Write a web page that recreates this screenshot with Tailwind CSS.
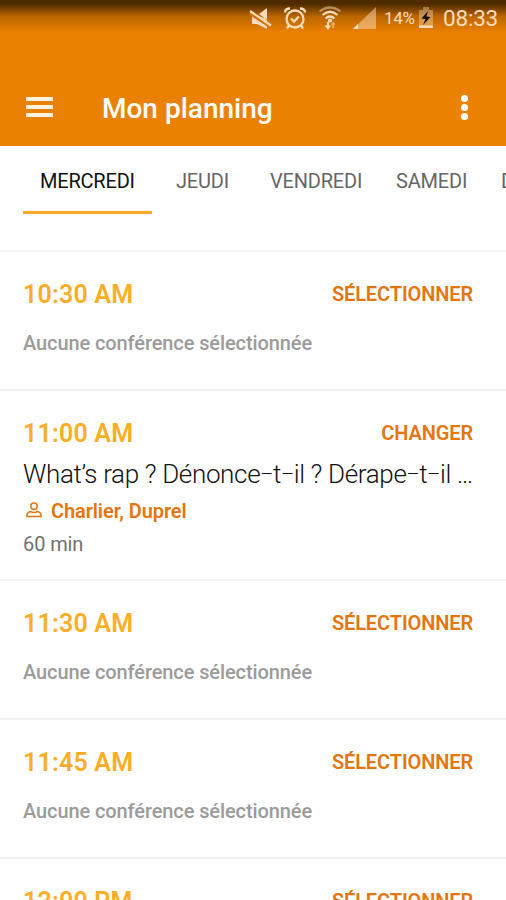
<!DOCTYPE html>
<html lang="fr">
<head>
<meta charset="utf-8">
<title>Mon planning</title>
<script src="https://cdn.jsdelivr.net/npm/@tailwindcss/browser@4"></script>
</head>
<body class="w-[506px] h-[900px] overflow-hidden bg-white font-[Roboto,sans-serif]">
<header class="h-[146px] bg-[#eb8100] text-white flex flex-col">
  <div class="h-[36px] shrink-0 flex items-center justify-end pr-[9px] bg-linear-to-b from-[#4d2a00] from-10% via-[#b96500] via-45% to-[#eb8100] to-90% text-[#fbdcba]">
    <svg class="w-[24px] h-[24px] mr-[10px]" viewBox="0 0 24 24" fill="currentColor"><path d="M3 8v10h5l10 5V13zM10 8l8-6v12z"/><path d="M1 7l22 14" stroke="#d07100" stroke-width="4"/><path d="M1 5l21 14.500" stroke="currentColor" stroke-width="2.200"/></svg>
    <svg class="w-[24px] h-[24px] mr-[11px]" viewBox="0 0 24 24" fill="none" stroke="currentColor" stroke-width="2.300"><circle cx="12" cy="13" r="8.500"/><path d="M8 12.500l3 3 5-5M2 6.500q0-4 5-4M22 6.500q0-4-5-4M6 19.500l-2 3M18 19.500l2 3"/></svg>
    <svg class="w-[24px] h-[26px] mr-[11px]" viewBox="0 0 24 26" fill="none" stroke="currentColor" stroke-width="2.200"><path d="M1.500 6.500Q12-1.500 22.500 6.500" opacity=".5"/><path d="M4.500 10Q12 3.500 19.500 10M7.500 13.500Q12 9.500 16.500 13.500"/><circle cx="12" cy="15.500" r="1" fill="currentColor"/><path d="M10 17v5"/><path d="M6.500 20.500h6.500l-3 4.500z" fill="currentColor" stroke="none"/><path d="M15 23v-4M13.500 20l1.500-2 1.500 2" opacity=".5"/></svg>
    <svg class="w-[23px] h-[24px] mr-[8px]" viewBox="0 0 23 24" fill="currentColor"><path d="M0 23L23 1v22z" opacity=".5"/><path d="M0 23l5-5v5z"/></svg>
    <span class="w-[31px] text-[17px] leading-[24px] tracking-[-0.3px] whitespace-nowrap mr-[4px]">14%</span>
    <svg class="w-[14px] h-[22px] mr-[10px]" viewBox="0 0 14 22"><path d="M4 0h6v3h4v18H0V3h4z" fill="currentColor" opacity=".4"/><path d="M0 18.500h14V21H0z" fill="currentColor"/><path d="M9 4L2.500 11.500l4 .5L4 18l7.500-8-4-.5z" fill="#160c00"/></svg>
    <span class="w-[54px] text-[22.500px] leading-[26px] tracking-[-0.2px] whitespace-nowrap">08:33</span>
  </div>
  <div class="h-[110px] flex items-center pl-[26px] pr-[38px] pt-[34px]">
    <div class="w-[27px] mr-[49px] mb-[3px] flex flex-col gap-[4px]"><i class="h-[4px] bg-[#fff0e0]"></i><i class="h-[4px] bg-[#fff0e0]"></i><i class="h-[4px] bg-[#fff0e0]"></i></div>
    <h1 class="text-[28px] leading-[34px] font-medium flex-1 whitespace-nowrap pt-[2px]">Mon planning</h1>
    <div class="flex flex-col gap-[2px] w-[7px] mb-[2px]"><i class="size-[7px] rounded-full bg-white"></i><i class="size-[7px] rounded-full bg-white"></i><i class="size-[7px] rounded-full bg-white"></i></div>
  </div>
</header>
<nav class="h-[104px] pl-[23px] flex items-start whitespace-nowrap text-[20px] leading-[24px] tracking-[-0.2px] text-[#666] overflow-hidden">
  <div class="w-[129px] h-[68px] shrink-0 border-b-[3px] border-[#ffa726] pt-[23px] pl-[17px] text-[#111]">MERCREDI</div>
  <div class="pt-[23px] w-[94px] pl-[24px] shrink-0">JEUDI</div>
  <div class="pt-[23px] w-[126px] pl-[24px] shrink-0">VENDREDI</div>
  <div class="pt-[23px] w-[105px] pl-[24px] shrink-0">SAMEDI</div>
  <div class="pt-[23px] pl-[24px] shrink-0">DIMANCHE</div>
</nav>
<main class="h-[650px] overflow-hidden font-medium whitespace-nowrap">
  <section class="h-[139px] border-t-2 border-[#f3f3f3] px-[23px] pr-[33px] pt-[27px]">
    <div class="flex items-center justify-between h-[32px]"><h2 class="text-[25px] font-semibold tracking-[0.2px] text-[#fdae26]">10:30 AM</h2><button class="text-[20px] font-semibold tracking-[-0.12px] pb-[2px] text-[#e5760f]">SÉLECTIONNER</button></div>
    <p class="text-[20px] leading-[24px] tracking-[-0.1px] mt-[20px] text-[#9b9b9b]">Aucune conférence sélectionnée</p>
  </section>
  <section class="h-[190px] border-t-2 border-[#f3f3f3] px-[23px] pr-[33px] pt-[27px]">
    <div class="flex items-center justify-between h-[32px]"><h2 class="text-[25px] font-semibold tracking-[0.2px] text-[#fdae26]">11:00 AM</h2><button class="text-[20px] font-semibold tracking-[-0.12px] pb-[2px] text-[#e5760f]">CHANGER</button></div>
    <h3 class="text-[26px] leading-[32px] h-[32px] tracking-[-0.35px] mt-[8px] font-light text-[#111]">What’s rap ? Dénonce<span class="text-[20px] leading-none align-[2px]">–</span>t<span class="text-[20px] leading-none align-[2px]">–</span>il ? Dérape<span class="text-[20px] leading-none align-[2px]">–</span>t<span class="text-[20px] leading-none align-[2px]">–</span>il <span class="tracking-[-1.200px]">...</span></h3>
    <div class="flex items-center h-[24px] mt-[9px] text-[#e5760f]"><svg class="w-[16px] h-[16px] ml-[3px] mr-[9px] mb-[2px]" viewBox="0 0 16 16" fill="none" stroke="currentColor" stroke-width="1.500"><circle cx="8" cy="4.300" r="3.200"/><path d="M4.500 9.500Q1 10.500 1 13v1.500h14V13q0-2.500-3.500-3.500Q8 11.500 4.500 9.500z"/></svg><span class="text-[20px] font-semibold tracking-[-0.1px]">Charlier, Duprel</span></div>
    <p class="text-[20px] leading-[24px] tracking-[-0.1px] mt-[9px] font-normal text-[#707070]">60 min</p>
  </section>
  <section class="h-[139px] border-t-2 border-[#f3f3f3] px-[23px] pr-[33px] pt-[27px]">
    <div class="flex items-center justify-between h-[32px]"><h2 class="text-[25px] font-semibold tracking-[0.2px] text-[#fdae26]">11:30 AM</h2><button class="text-[20px] font-semibold tracking-[-0.12px] pb-[2px] text-[#e5760f]">SÉLECTIONNER</button></div>
    <p class="text-[20px] leading-[24px] tracking-[-0.1px] mt-[20px] text-[#9b9b9b]">Aucune conférence sélectionnée</p>
  </section>
  <section class="h-[139px] border-t-2 border-[#f3f3f3] px-[23px] pr-[33px] pt-[27px]">
    <div class="flex items-center justify-between h-[32px]"><h2 class="text-[25px] font-semibold tracking-[0.2px] text-[#fdae26]">11:45 AM</h2><button class="text-[20px] font-semibold tracking-[-0.12px] pb-[2px] text-[#e5760f]">SÉLECTIONNER</button></div>
    <p class="text-[20px] leading-[24px] tracking-[-0.1px] mt-[20px] text-[#9b9b9b]">Aucune conférence sélectionnée</p>
  </section>
  <section class="h-[139px] border-t-2 border-[#f3f3f3] px-[23px] pr-[33px] pt-[27px]">
    <div class="flex items-center justify-between h-[32px]"><h2 class="text-[25px] font-semibold tracking-[0.2px] text-[#fdae26]">12:00 PM</h2><button class="text-[20px] font-semibold tracking-[-0.12px] pb-[2px] text-[#e5760f]">SÉLECTIONNER</button></div>
  </section>
</main>
</body>
</html>
